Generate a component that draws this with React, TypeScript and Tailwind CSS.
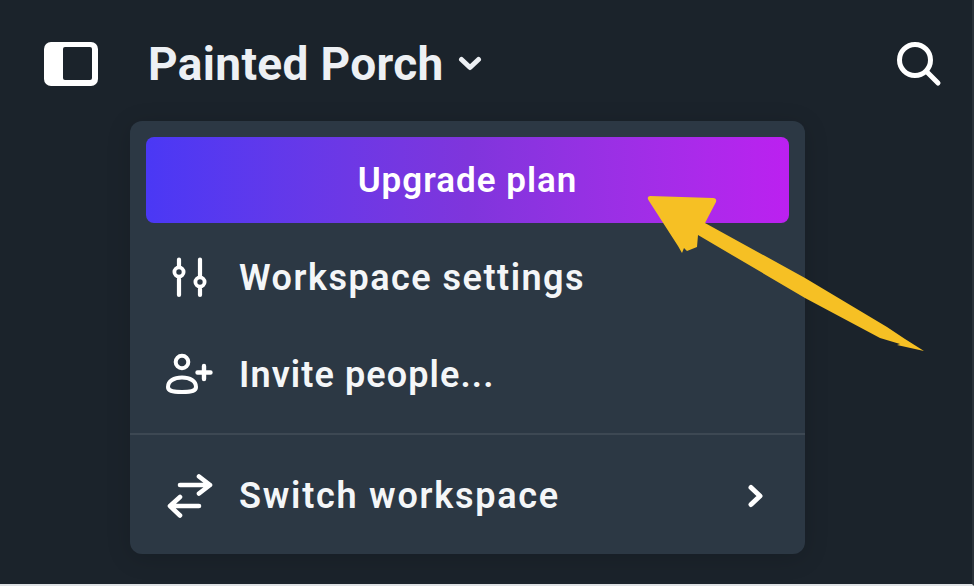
import React from 'react'

const SlidersIcon = () => (
  <svg width="48" height="44" viewBox="0 0 48 44" fill="none" stroke="#fff" strokeWidth="4.200" strokeLinecap="round">
    <path d="M14 3.500v6M14 23v16M35 3.500v16M35 33v6" />
    <circle cx="14" cy="16" r="4.600" strokeWidth="3.800" />
    <circle cx="35" cy="26" r="4.600" strokeWidth="3.800" />
  </svg>
)

const InviteIcon = () => (
  <svg width="48" height="44" viewBox="0 0 48 44" fill="none" stroke="#fff" strokeWidth="4" strokeLinecap="round">
    <circle cx="17" cy="9" r="6.300" />
    <path d="M3 34c0-6 6-9.500 14-9.500s14 3.500 14 9.500c0 3.500-3 5-14 5S3 37.500 3 34Z" />
    <path d="M39 13v13M32.500 19.500h13" strokeWidth="4.400" />
  </svg>
)

const SwitchIcon = () => (
  <svg width="48" height="44" viewBox="0 0 48 44" fill="none" stroke="#fff" strokeWidth="4.600" strokeLinecap="round" strokeLinejoin="round">
    <path d="M15 11h30M34 2.500 45 11l-11 8.500" />
    <path d="M34 32H5M15 23 5 32l10 9.500" />
  </svg>
)

const Row = ({ icon, label, tracking, chevron }: { icon: React.ReactNode; label: string; tracking: string; chevron?: boolean }) => (
  <div className="flex items-center h-[97px] pl-[35px] pr-[40px]">
    <div className="w-[74px] flex items-center justify-start shrink-0">{icon}</div>
    <span className={`text-[36px] font-semibold text-[#f4f6f8] leading-none ${tracking}`}>{label}</span>
    {chevron && (
      <svg className="ml-auto" width="18" height="24" viewBox="0 0 18 24" fill="none" stroke="#fff" strokeWidth="5" strokeLinecap="round" strokeLinejoin="round">
        <path d="M4 3.500 13 12l-9 8.500" />
      </svg>
    )}
  </div>
)

export default function App() {
  return (
    <div className="relative w-[974px] h-[586px] overflow-hidden bg-[#1b232b] font-['Roboto',sans-serif] border-r-2 border-b-2 border-r-[#2a3239] border-b-[#dfe2e5]">
      {/* Top bar */}
      <div className="flex items-center h-[121px] pt-[7px] pl-[44px] pr-[30px]">
        <svg width="54" height="44" viewBox="0 0 54 44" fill="none">
          <rect width="54" height="44" rx="7" fill="#fff" />
          <rect x="19" y="5" width="29" height="33" rx="2" fill="#1b232b" />
        </svg>
        <span className="ml-[50px] text-[46px] font-bold tracking-[0.35px] text-[#edf0f4] leading-none">Painted Porch</span>
        <svg className="ml-[14px]" width="24" height="16" viewBox="0 0 24 16" fill="none" stroke="#edf0f4" strokeWidth="5" strokeLinecap="round" strokeLinejoin="round">
          <path d="M3.500 3.500 12 11.500l8.500-8" />
        </svg>
        <svg className="ml-auto" width="46" height="46" viewBox="0 0 46 46" fill="none" stroke="#fff" strokeWidth="5" strokeLinecap="round">
          <circle cx="19" cy="19" r="15.500" />
          <path d="m30.500 30.500 11.500 11.500" />
        </svg>
      </div>

      {/* Dropdown */}
      <div className="ml-[130px] w-[675px] h-[433px] rounded-[12px] bg-[#2c3844] p-[16px] shadow-[0_4px_24px_rgba(0,0,0,0.15)]">
        <div className="flex items-center justify-center h-[86px] pt-[3px] rounded-[8px] bg-gradient-to-r from-[#4a38f5] via-[#7f35dc] to-[#bc20f0] text-[35px] font-semibold tracking-[1px] text-white">
          Upgrade plan
        </div>
        <div className="-mx-[16px] pt-[6px]">
          <Row icon={<SlidersIcon />} label="Workspace settings" tracking="tracking-[1.5px]" />
          <Row icon={<InviteIcon />} label="Invite people..." tracking="tracking-[1.1px]" />
          <div className="h-[2px] mt-[10px] bg-[#3d4853]" />
          <div className="pt-[12px]">
            <Row icon={<SwitchIcon />} label="Switch workspace" tracking="tracking-[1.75px]" chevron />
          </div>
        </div>
      </div>

      {/* Hand-drawn annotation arrow */}
      <svg className="absolute left-0 top-0 pointer-events-none" width="974" height="586" viewBox="0 0 974 586">
        <path
          fill="#f6c024"
          d="M650 196 Q646 197 649 201 L678 246 L682 253 L684 248 L687 251 L697 247 L698 235 L805 298 L880 338 L900 344 L897 345 L924 351 L905 339 L887 327 L805 278 L705 223 L716 202 Q717 198 713 198 Z"
        />
      </svg>
    </div>
  )
}
